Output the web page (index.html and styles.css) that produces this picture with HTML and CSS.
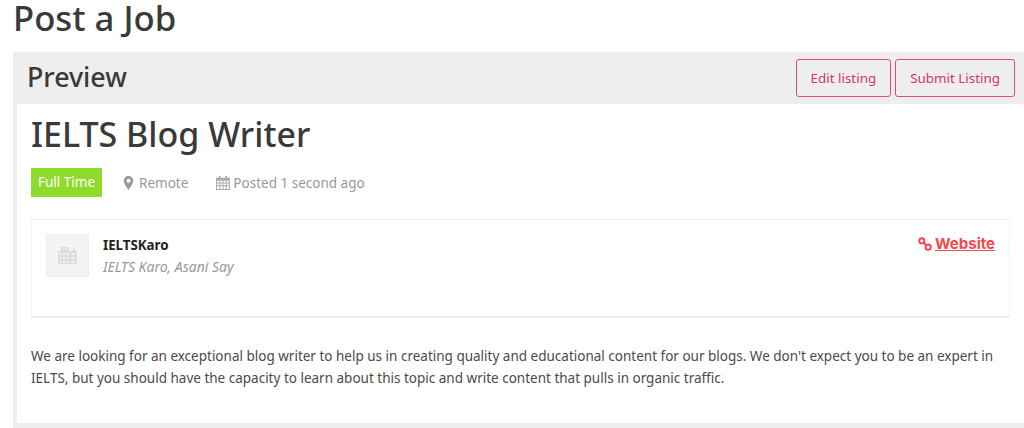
FILE: index.html
```html
<!DOCTYPE html>
<html lang="en">
<head>
    <meta charset="UTF-8">
    <meta name="viewport" content="width=device-width, initial-scale=1.0">
    <title>Post a Job</title>
    <link rel="stylesheet" href="styles.css">
</head>
<body>
    <h1 class="page-title">Post a Job</h1>

    <div class="preview">
        <div class="preview-head">
            <h2>Preview</h2>
            <div class="actions">
                <button class="btn">Edit listing</button>
                <button class="btn">Submit Listing</button>
            </div>
        </div>

        <div class="preview-body">
            <h1 class="job-title">IELTS Blog Writer</h1>

            <div class="meta">
                <span class="badge">Full Time</span>
                <span class="meta-item location">
                    <svg class="icon-pin" viewBox="0 0 12 16"><path fill-rule="evenodd" d="M6 0a5.500 5.500 0 0 0-5.500 5.500C.5 9 6 16 6 16s5.500-7 5.500-10.500A5.500 5.500 0 0 0 6 0zm0 3.200a2.300 2.300 0 1 1 0 4.600 2.300 2.300 0 0 1 0-4.600z"/></svg>
                    Remote
                </span>
                <span class="meta-item posted">
                    <svg class="icon-cal" viewBox="0 0 15 15"><path fill-rule="evenodd" d="M3 0h2v2h5V0h2v2h3v13H0V2h3zM1 5v2h2.500V5zm3.500 0v2h2.500V5zm3.500 0v2h2.500V5zm3.500 0v2H14V5zM1 8v2h2.500V8zm3.500 0v2h2.500V8zm3.500 0v2h2.500V8zm3.500 0v2H14V8zM1 11v3h2.500v-3zm3.500 0v3h2.500v-3zm3.500 0v3h2.500v-3zm3.500 0v3H14v-3z"/></svg>
                    Posted 1 second ago
                </span>
            </div>

            <div class="company">
                <div class="logo">
                    <svg viewBox="0 0 19 17"><path fill-rule="evenodd" d="M0 4h3V0h8v4h3l2-3 3 5v11H0zm1.500 2v2h2V6zm3.500 0v2h2V6zm3.500 0v2h2V6zm5 0v2h3V6zM1.500 10v2h2v-2zm3.500 0v2h2v-2zm3.500 0v2h2v-2zm5 0v2h3v-2zM1.500 14v1.500h2V14zm3.500 0v1.500h2V14zm3.500 0v1.500h2V14zm5 0v1.500h3V14zM5 1.500v1.500h1.500V1.500zm3 0v1.500h1.500V1.500z"/></svg>
                </div>
                <div class="company-info">
                    <strong>IELTSKaro</strong>
                    <em>IELTS Karo, Asani Say</em>
                </div>
                <a class="website" href="#">
                    <svg viewBox="0 0 14 14"><g fill="none" stroke="currentColor" stroke-width="2"><circle cx="3.800" cy="3.800" r="2.600"/><circle cx="10.200" cy="10.200" r="2.600"/><path d="M5.500 5.500l3 3"/></g></svg>
                    <span>Website</span>
                </a>
            </div>

            <p class="description">We are looking for an exceptional blog writer to help us in creating quality and educational content for our blogs. We don't expect you to be an expert in IELTS, but you should have the capacity to learn about this topic and write content that pulls in organic traffic.</p>
        </div>
    </div>
</body>
</html>
```

FILE: styles.css
```css
body {
    margin: 0;
    font-family: "Noto Sans", "Open Sans", sans-serif;
    color: #3a3a3a;
    background: #fff;
    overflow: hidden;
}

.page-title {
    margin: 0;
    padding: 0 13px;
    height: 52px;
    font-size: 34.7px;
    line-height: 36px;
    font-weight: 500;
}

.preview {
    margin-left: 13px;
    background: #eee;
    padding-bottom: 5px;
}

.preview-head {
    display: flex;
    justify-content: space-between;
    align-items: center;
    height: 52px;
    padding: 0 9px 0 14px;
}

.preview-head h2 {
    margin: 0 0 3px;
    font-size: 26.8px;
    font-weight: 500;
}

.actions {
    display: flex;
    gap: 4px;
}

.btn {
    height: 38px;
    padding: 0 14px;
    background: transparent;
    border: 1px solid #dd4a7c;
    border-radius: 3px;
    color: #d9336f;
    font-family: inherit;
    font-size: 13.4px;
}

.preview-body {
    margin-left: 4px;
    background: #fff;
    height: 319px;
    padding: 0 14px;
}

.job-title {
    margin: 0;
    padding-top: 8px;
    padding-bottom: 1px;
    font-size: 34px;
    line-height: 44px;
    font-weight: 500;
}

.meta {
    display: flex;
    align-items: center;
    margin-top: 11px;
    font-size: 13.500px;
    color: #999;
}

.badge {
    background: #8fdb2d;
    color: #fff;
    height: 29px;
    line-height: 29px;
    padding: 0 7px;
}

.meta-item {
    display: flex;
    align-items: center;
}

.location {
    margin-left: 21px;
    gap: 5px;
}

.posted {
    margin-left: 28px;
    gap: 3px;
}

.icon-pin {
    width: 11px;
    height: 14px;
    fill: #999;
}

.icon-cal {
    width: 14px;
    height: 14px;
    fill: #aaa;
}

.company {
    display: flex;
    align-items: flex-start;
    margin-top: 22px;
    height: 99px;
    padding: 14px 14px 14px 14px;
    border: 1px solid #f1f1f1;
    border-bottom: 2px solid #eee;
    box-sizing: border-box;
}

.logo {
    width: 43px;
    height: 43px;
    box-sizing: border-box;
    background: #f4f4f4;
    border: 1px solid #eee;
    display: flex;
    align-items: center;
    justify-content: center;
}

.logo svg {
    width: 19px;
    height: 17px;
    fill: #ddd;
}

.company-info {
    flex: 1;
    margin-left: 14px;
    display: flex;
    flex-direction: column;
    line-height: 22px;
}

.company-info strong {
    color: #222;
    font-size: 13.300px;
}

.company-info em {
    color: #999;
    font-size: 14px;
}

.website {
    display: flex;
    align-items: center;
    gap: 3px;
    color: #f8474c;
    font-family: "Inter", sans-serif;
    font-size: 15px;
    font-weight: 700;
    line-height: 20px;
}

.website svg {
    width: 14px;
    height: 14px;
}

.description {
    margin: 27px 0 0;
    font-size: 13.500px;
    line-height: 22px;
    color: #4a4a4a;
}
```
